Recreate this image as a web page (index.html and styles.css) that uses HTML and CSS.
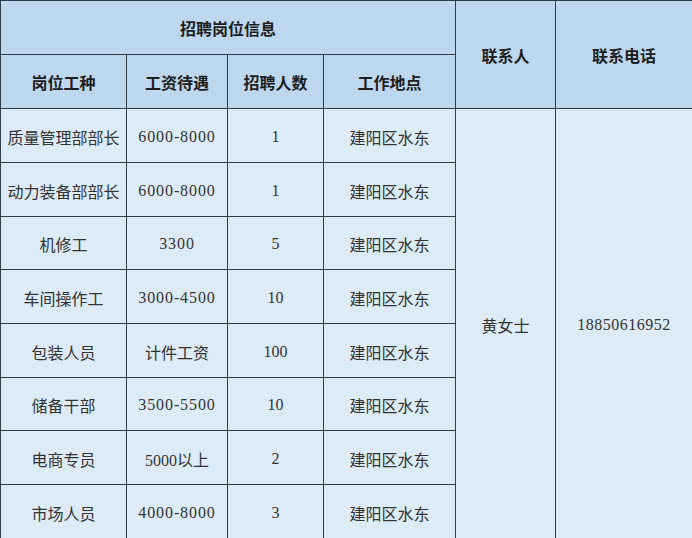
FILE: index.html
```html
<!DOCTYPE html>
<html lang="zh-CN">
<head>
<meta charset="utf-8">
<title>招聘岗位信息</title>
<link rel="stylesheet" href="styles.css">
</head>
<body>
<table class="jobs">
  <colgroup>
    <col class="c1"><col class="c2"><col class="c3"><col class="c4"><col class="c5"><col class="c6">
  </colgroup>
  <thead>
    <tr class="h1">
      <th colspan="4">招聘岗位信息</th>
      <th rowspan="2">联系人</th>
      <th rowspan="2">联系电话</th>
    </tr>
    <tr class="h2">
      <th>岗位工种</th>
      <th>工资待遇</th>
      <th>招聘人数</th>
      <th>工作地点</th>
    </tr>
  </thead>
  <tbody>
    <tr class="r54">
      <td>质量管理部部长</td><td class="num">6000-8000</td><td>1</td><td>建阳区水东</td>
      <td rowspan="8">黄女士</td><td rowspan="8" class="phone">18850616952</td>
    </tr>
    <tr class="r54"><td>动力装备部部长</td><td class="num">6000-8000</td><td>1</td><td>建阳区水东</td></tr>
    <tr class="r53"><td>机修工</td><td class="num">3300</td><td>5</td><td>建阳区水东</td></tr>
    <tr class="r54"><td>车间操作工</td><td class="num">3000-4500</td><td>10</td><td>建阳区水东</td></tr>
    <tr class="r54"><td>包装人员</td><td>计件工资</td><td>100</td><td>建阳区水东</td></tr>
    <tr class="r53"><td>储备干部</td><td class="num">3500-5500</td><td>10</td><td>建阳区水东</td></tr>
    <tr class="r54"><td>电商专员</td><td>5000以上</td><td>2</td><td>建阳区水东</td></tr>
    <tr class="r54"><td>市场人员</td><td class="num">4000-8000</td><td>3</td><td>建阳区水东</td></tr>
  </tbody>
</table>
</body>
</html>
```

FILE: styles.css
```css
html, body {
  margin: 0;
  padding: 0;
  background: #ffffff;
}

.jobs {
  border-collapse: collapse;
  table-layout: fixed;
  width: 692px;
  font-family: "Liberation Serif", "Noto Sans CJK SC", serif;
  font-size: 16px;
}

.c1 { width: 126px; }
.c2 { width: 101px; }
.c3 { width: 96px; }
.c4 { width: 132px; }
.c5 { width: 100px; }
.c6 { width: 137px; }

.jobs th,
.jobs td {
  border: 1px solid #2f3c4a;
  padding: 0;
  text-align: center;
  vertical-align: middle;
  white-space: nowrap;
  overflow: hidden;
}

.jobs th {
  background: #bdd7ee;
  color: #1e1e1e;
  font-family: "Noto Sans CJK SC", sans-serif;
  font-weight: 700;
  font-size: 16px;
}

.jobs td {
  background: #ddebf7;
  color: #333333;
  padding-top: 2px;
}

.jobs td.num {
  letter-spacing: 0.9px;
}

.jobs td.phone {
  letter-spacing: 0.5px;
}

.h1, .h2 { height: 54px; }
.r54 { height: 54px; }
.r53 { height: 53px; }
```
